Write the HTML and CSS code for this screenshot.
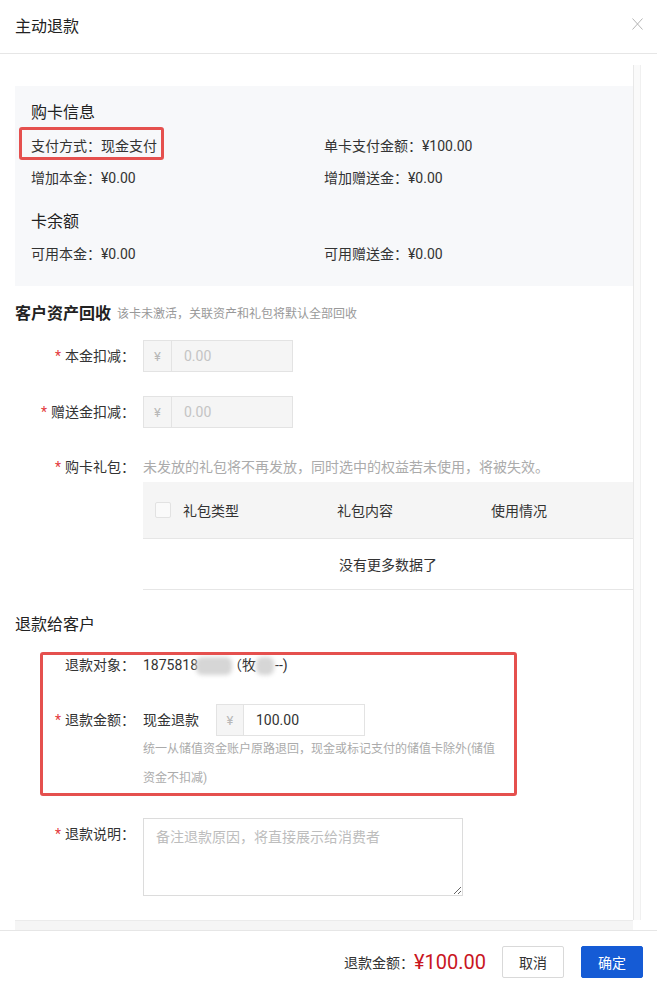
FILE: index.html
```html
<!DOCTYPE html>
<html lang="zh-CN">
<head>
<meta charset="utf-8">
<title>主动退款</title>
<link rel="stylesheet" href="styles.css">
</head>
<body>
<div class="modal">
  <header class="modal-header">
    <h1 class="modal-title">主动退款</h1>
    <button class="close-btn" aria-label="关闭">
      <svg width="11" height="12" viewBox="0 0 11 12"><path d="M0.5 0.5L10.5 11.5M10.5 0.5L0.5 11.5" stroke="#b5b5b5" stroke-width="1" fill="none"/></svg>
    </button>
  </header>

  <div class="modal-body">
    <div class="scroll-row">
      <div class="content">
        <section class="info-card">
          <h2 class="card-title">购卡信息</h2>
          <div class="info-grid">
            <div><span class="highlight">支付方式：现金支付</span></div>
            <div>单卡支付金额：¥100.00</div>
            <div>增加本金：¥0.00</div>
            <div>增加赠送金：¥0.00</div>
          </div>
          <h2 class="card-title second">卡余额</h2>
          <div class="info-grid tight">
            <div>可用本金：¥0.00</div>
            <div>可用赠送金：¥0.00</div>
          </div>
        </section>

        <h2 class="section-title bold">客户资产回收<span class="section-hint">该卡未激活，关联资产和礼包将默认全部回收</span></h2>

        <div class="form-item first">
          <label class="form-label"><i class="req">*</i>本金扣减：</label>
          <div class="form-control">
            <div class="input-group disabled"><span class="prefix">¥</span><input type="text" value="0.00" disabled></div>
          </div>
        </div>

        <div class="form-item">
          <label class="form-label"><i class="req">*</i>赠送金扣减：</label>
          <div class="form-control">
            <div class="input-group disabled"><span class="prefix">¥</span><input type="text" value="0.00" disabled></div>
          </div>
        </div>

        <div class="form-item">
          <label class="form-label short"><i class="req">*</i>购卡礼包：</label>
          <div class="form-control">
            <div class="gift-hint">未发放的礼包将不再发放，同时选中的权益若未使用，将被失效。</div>
            <div class="gift-table">
              <div class="table-head">
                <div class="cell-check"><span class="checkbox"></span></div>
                <div class="cell">礼包类型</div>
                <div class="cell">礼包内容</div>
                <div class="cell">使用情况</div>
              </div>
              <div class="table-empty">没有更多数据了</div>
            </div>
          </div>
        </div>

        <h2 class="section-title refund-title">退款给客户</h2>

        <div class="refund-block">
          <div class="form-item flush">
            <label class="form-label">退款对象：</label>
            <div class="form-control value-line">1875818<span class="blur b1"></span>（牧<span class="blur b2"></span>--)</div>
          </div>
          <div class="form-item refund-amount">
            <label class="form-label"><i class="req">*</i>退款金额：</label>
            <div class="form-control">
              <div class="amount-line">
                <span class="refund-way">现金退款</span>
                <div class="input-group refund-input"><span class="prefix">¥</span><input type="text" value="100.00"></div>
              </div>
              <p class="help">统一从储值资金账户原路退回，现金或标记支付的储值卡除外(储值资金不扣减)</p>
            </div>
          </div>
          <div class="annot-box"></div>
        </div>

        <div class="form-item note-item">
          <label class="form-label"><i class="req">*</i>退款说明：</label>
          <div class="form-control">
            <textarea class="note" placeholder="备注退款原因，将直接展示给消费者"></textarea>
          </div>
        </div>
      </div>
      <div class="scrollbar"></div>
    </div>
    <div class="bottom-strip"></div>
  </div>

  <footer class="modal-footer">
    <div class="total"><span class="total-label">退款金额：</span><span class="total-amount">¥100.00</span></div>
    <button class="btn">取消</button>
    <button class="btn btn-primary">确定</button>
  </footer>
</div>
</body>
</html>
```

FILE: styles.css
```css
* { box-sizing: border-box; }
html, body { margin: 0; padding: 0; background: #fff; }
body {
  font-family: Roboto, "Noto Sans CJK SC", sans-serif;
  color: #333;
  font-size: 14px;
}
.modal { width: 657px; height: 993px; display: flex; flex-direction: column; overflow: hidden; }

.modal-header {
  height: 54px;
  flex: none;
  border-bottom: 1px solid #e6e6e6;
  display: flex;
  align-items: center;
  justify-content: space-between;
  padding: 0 14px 0 15px;
}
.modal-title { margin: 0; font-size: 16px; line-height: 22px; font-weight: 400; color: #222; }
.close-btn {
  align-self: flex-start;
  margin-top: 18px;
  padding: 0;
  border: 0;
  background: none;
  width: 11px;
  height: 12px;
  display: block;
}
.close-btn svg { display: block; }

.modal-body {
  height: 876px;
  flex: none;
  padding: 11px 16px 0 15px;
  display: flex;
  flex-direction: column;
}
.scroll-row { height: 855px; display: flex; }
.content { flex: 1; min-width: 0; overflow: hidden; padding-top: 21px; }
.scrollbar {
  width: 8px;
  flex: none;
  border-left: 1px solid #e8e8e8;
  border-right: 1px solid #f0f0f0;
  background: #fafafa;
}
.bottom-strip { height: 10px; margin-right: 8px; background: #f5f5f5; border-top: 1px solid #ebebeb; }

/* info card */
.info-card { background: #f7f8fa; padding: 16px 16px; }
.card-title { margin: 0; font-size: 16px; line-height: 22px; font-weight: 400; color: #222; }
.card-title.second { margin-top: 17px; }
.info-grid {
  display: grid;
  grid-template-columns: 1fr 1fr;
  grid-auto-rows: 32px;
  align-items: center;
  margin-top: 6px;
  line-height: 22px;
}
.info-grid.tight { margin-top: 5px; }
.highlight { position: relative; display: inline-block; line-height: 22px; }
.highlight::after {
  content: "";
  position: absolute;
  left: -12px;
  right: -7px;
  top: -8px;
  bottom: -3px;
  border: 3px solid #e5504e;
  border-radius: 3px;
}

/* sections */
.section-title {
  margin: 17px 0 0;
  font-size: 16px;
  line-height: 22px;
  font-weight: 400;
  color: #222;
  display: flex;
  align-items: center;
}
.section-title.bold { font-weight: 700; }
.section-hint { font-size: 12px; font-weight: 400; color: #999; margin-left: 6px; }
.refund-title { margin-top: 24px; }

/* form */
.form-item { display: flex; align-items: flex-start; margin-top: 24px; }
.form-item.first { margin-top: 15px; }
.form-item.flush { margin-top: 0; }
.form-label {
  width: 120px;
  flex: none;
  text-align: right;
  line-height: 32px;
  color: #333;
  margin-right: 8px;
  white-space: nowrap;
}
.form-label.short { line-height: 30px; }
.req { color: #e3393c; font-style: normal; margin-right: 4px; }
.form-control { flex: 1; min-width: 0; }

.input-group { display: flex; width: 150px; height: 32px; border: 1px solid #e3e3e3; background: #fff; }
.input-group .prefix {
  width: 28px;
  flex: none;
  border-right: 1px solid #e3e3e3;
  background: #f5f5f5;
  color: #b8b8b8;
  display: flex;
  align-items: center;
  justify-content: center;
  font-size: 13px;
}
.input-group input {
  flex: 1;
  min-width: 0;
  border: 0;
  padding: 0 12px;
  font: inherit;
  font-size: 14px;
  color: #333;
  background: #fff;
  outline: none;
}
.input-group.disabled input { background: #f5f5f5; color: #c4c4c4; -webkit-text-fill-color: #c4c4c4; opacity: 1; }

.gift-hint { line-height: 30px; color: #ababab; }
.table-head {
  display: grid;
  grid-template-columns: 28px 154px 154px 1fr;
  height: 57px;
  background: #f5f5f5;
  border-bottom: 1px solid #e6e6e6;
  align-items: center;
  font-weight: 400;
  color: #333;
}
.cell-check { padding-left: 12px; display: flex; align-items: center; }
.checkbox { width: 16px; height: 16px; border: 1px solid #e2e2e2; background: #fafafa; border-radius: 2px; display: block; }
.cell { padding-left: 12px; }
.table-empty {
  height: 51px;
  display: flex;
  align-items: center;
  justify-content: center;
  border-bottom: 1px solid #e6e6e6;
  color: #333;
}

.refund-block { position: relative; margin-top: 13px; }
.value-line { line-height: 32px; color: #333; white-space: nowrap; }
.blur {
  display: inline-block;
  vertical-align: middle;
  height: 18px;
  background: #d6d6d6;
  border-radius: 6px;
  filter: blur(2px);
}
.blur.b1 { width: 36px; margin: 0 -4px 0 -2px; }
.blur.b2 { width: 18px; margin: 0 1px 0 0; }
.refund-amount { margin-top: 23px; }
.amount-line { display: flex; align-items: center; }
.refund-way { line-height: 32px; color: #333; }
.refund-input { width: 149px; margin-left: 17px; }
.refund-input .prefix { width: 27px; }
.help { margin: -1px 0 0; width: 358px; font-size: 12px; line-height: 29px; color: #ababab; }
.annot-box {
  position: absolute;
  left: 25px;
  top: 3px;
  width: 477px;
  height: 144px;
  border: 3px solid #e5504e;
  border-radius: 3px;
  pointer-events: none;
}

.note-item { margin-top: 25px; }
.note {
  display: block;
  width: 320px;
  height: 78px;
  border: 1px solid #dcdcdc;
  padding: 7px 12px;
  font: inherit;
  font-size: 14px;
  line-height: 22px;
  color: #333;
  resize: both;
  outline: none;
}
.note::placeholder { color: #bdbdbd; }

/* footer */
.modal-footer {
  height: 63px;
  flex: none;
  border-top: 1px solid #e6e6e6;
  display: flex;
  align-items: flex-start;
  justify-content: flex-end;
  padding: 15px 14px 0 0;
}
.total { display: flex; align-items: center; height: 32px; margin-right: 16px; }
.total-label { font-size: 14px; color: #333; }
.total-amount { font-size: 20px; color: #c9161f; line-height: 32px; }
.btn {
  height: 32px;
  width: 62px;
  border: 1px solid #d9d9d9;
  background: #fff;
  font: inherit;
  font-size: 14px;
  color: #333;
  border-radius: 2px;
  padding: 0;
}
.btn-primary { background: #155bd5; border-color: #155bd5; color: #fff; margin-left: 17px; }
```
